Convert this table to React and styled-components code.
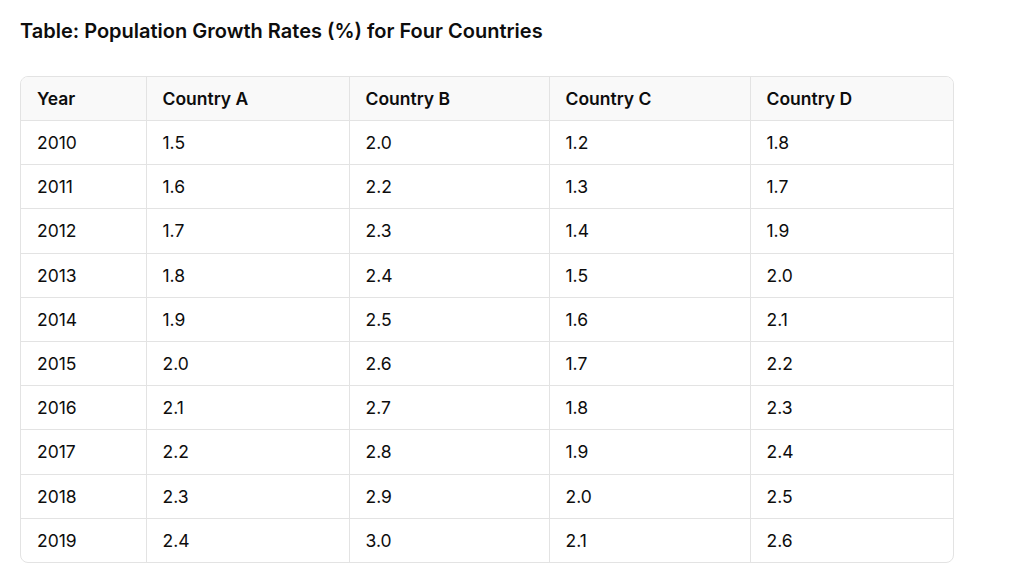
import styled, { createGlobalStyle } from 'styled-components';

const GlobalStyle = createGlobalStyle`
  body {
    margin: 0;
    background: #ffffff;
    font-family: Inter, "Noto Sans", sans-serif;
    color: #0d0d0d;
  }
`;

const Halaman = styled.div`
  padding: 18px 20px 0 20px;
`;

const Judul = styled.h3`
  margin: 0 0 32px 0;
  font-size: 20px;
  font-weight: 600;
  letter-spacing: 0;
  line-height: 26px;
`;

const Bingkai = styled.div`
  width: 932px;
  border: 1px solid #e3e3e3;
  border-radius: 8px;
  overflow: hidden;
`;

const Tabel = styled.table`
  width: 100%;
  border-collapse: collapse;
  table-layout: fixed;
  font-size: 17.5px;
  letter-spacing: 0;
`;

const SelKepala = styled.th`
  background: #f9f9f9;
  font-weight: 600;
  text-align: left;
  height: 43px;
  padding: 0 16px;
  border-bottom: 1px solid #e3e3e3;
  border-left: ${({ $pertama }) => ($pertama ? 'none' : '1px solid #e3e3e3')};
`;

const Baris = styled.tr`
  height: 44.2px;
`;

const Sel = styled.td`
  font-weight: 400;
  padding: 0 16px;
  border-top: 1px solid #e3e3e3;
  border-left: ${({ $pertama }) => ($pertama ? 'none' : '1px solid #e3e3e3')};
`;

const lebarKolom = [125, 203, 200, 201, 203];
const kolom = ['Year', 'Country A', 'Country B', 'Country C', 'Country D'];
const data = [
  ['2010', '1.5', '2.0', '1.2', '1.8'],
  ['2011', '1.6', '2.2', '1.3', '1.7'],
  ['2012', '1.7', '2.3', '1.4', '1.9'],
  ['2013', '1.8', '2.4', '1.5', '2.0'],
  ['2014', '1.9', '2.5', '1.6', '2.1'],
  ['2015', '2.0', '2.6', '1.7', '2.2'],
  ['2016', '2.1', '2.7', '1.8', '2.3'],
  ['2017', '2.2', '2.8', '1.9', '2.4'],
  ['2018', '2.3', '2.9', '2.0', '2.5'],
  ['2019', '2.4', '3.0', '2.1', '2.6'],
];

const App = () => (
  <>
    <GlobalStyle />
    <Halaman>
      <Judul>Table: Population Growth Rates (%) for Four Countries</Judul>
      <Bingkai>
        <Tabel>
          <colgroup>
            {lebarKolom.map((w, i) => (
              <col key={i} style={{ width: w }} />
            ))}
          </colgroup>
          <thead>
            <tr>
              {kolom.map((k, i) => (
                <SelKepala key={k} $pertama={i === 0}>
                  {k}
                </SelKepala>
              ))}
            </tr>
          </thead>
          <tbody>
            {data.map((baris) => (
              <Baris key={baris[0]}>
                {baris.map((isi, i) => (
                  <Sel key={i} $pertama={i === 0}>
                    {isi}
                  </Sel>
                ))}
              </Baris>
            ))}
          </tbody>
        </Tabel>
      </Bingkai>
    </Halaman>
  </>
);

export default App;
